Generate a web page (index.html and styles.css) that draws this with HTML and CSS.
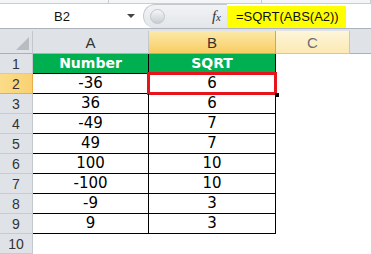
FILE: index.html
```html
<!DOCTYPE html>
<html lang="en">
<head>
    <meta charset="UTF-8">
    <title>SQRT</title>
    <link rel="stylesheet" href="styles.css">
</head>
<body>

<div class="ribbon">
    <div class="ribbon-part"></div>
    <div class="ribbon-part ribbon-mid"></div>
    <div class="ribbon-part"></div>
</div>

<div class="formula-bar">
    <div class="namebox">
        <span class="name">B2</span>
        <span class="arrow"></span>
    </div>
    <div class="fx-area">
        <span class="knob"></span>
        <span class="fx"><i>f</i><i class="x">x</i></span>
    </div>
    <div class="formula">=SQRT(ABS(A2))</div>
    <div class="formula-rest"></div>
</div>

<div class="band"></div>

<div class="sheet">
    <div class="row head-row">
        <div class="corner"><span class="tri"></span></div>
        <div class="col-head col-a">A</div>
        <div class="col-head col-b sel">B</div>
        <div class="col-head col-c hover">C</div>
        <div class="col-head col-rest"></div>
    </div>

    <div class="row">
        <div class="row-head">1</div>
        <div class="cell col-a title">Number</div>
        <div class="cell col-b title">SQRT</div>
    </div>
    <div class="row">
        <div class="row-head sel">2</div>
        <div class="cell col-a">-36</div>
        <div class="cell col-b active">6<span class="handle"></span></div>
    </div>
    <div class="row">
        <div class="row-head">3</div>
        <div class="cell col-a">36</div>
        <div class="cell col-b">6</div>
    </div>
    <div class="row">
        <div class="row-head">4</div>
        <div class="cell col-a">-49</div>
        <div class="cell col-b">7</div>
    </div>
    <div class="row">
        <div class="row-head">5</div>
        <div class="cell col-a">49</div>
        <div class="cell col-b">7</div>
    </div>
    <div class="row">
        <div class="row-head">6</div>
        <div class="cell col-a">100</div>
        <div class="cell col-b">10</div>
    </div>
    <div class="row">
        <div class="row-head">7</div>
        <div class="cell col-a">-100</div>
        <div class="cell col-b">10</div>
    </div>
    <div class="row">
        <div class="row-head">8</div>
        <div class="cell col-a">-9</div>
        <div class="cell col-b">3</div>
    </div>
    <div class="row">
        <div class="row-head">9</div>
        <div class="cell col-a">9</div>
        <div class="cell col-b">3</div>
    </div>
    <div class="row">
        <div class="row-head">10</div>
    </div>
</div>

</body>
</html>
```

FILE: styles.css
```css
body {
    margin: 0;
    width: 371px;
    height: 254px;
    overflow: hidden;
    background-color: #fff;
    font-family: "Liberation Sans", Arial, sans-serif;
}
.ribbon {
    display: flex;
    height: 3px;
    background-color: #f4f5f7;
    border-bottom: 1px solid #c9ccd1;
}
.ribbon-part {
    width: 150px;
    border-right: 1px solid #c9ccd1;
}
.ribbon-mid {
    width: 209px;
}
.formula-bar {
    display: flex;
    height: 24px;
    border-bottom: 1px solid #aeb3bb;
    background-color: #fff;
}
.namebox {
    width: 141px;
    display: flex;
    align-items: center;
    position: relative;
}
.name {
    width: 124px;
    text-align: center;
    font-size: 13px;
    color: #111;
}
.arrow {
    width: 0;
    height: 0;
    border-left: 4px solid transparent;
    border-right: 4px solid transparent;
    border-top: 4px solid #444;
    margin-left: 3px;
}
.fx-area {
    width: 84px;
    margin-left: 2px;
    display: flex;
    align-items: center;
    justify-content: space-between;
    background: linear-gradient(#f1f3f5, #e3e6ea);
    border: 1px solid #c4c9d0;
    border-right: none;
    border-bottom: none;
    border-radius: 12px 0 0 12px;
    box-sizing: border-box;
}
.knob {
    width: 13px;
    height: 13px;
    margin-left: 6px;
    border-radius: 50%;
    background: linear-gradient(#f5f6f8, #c9cdd3);
    border: 1px solid #c3c7cd;
}
.fx {
    margin-right: 6px;
    font-family: "Liberation Serif", serif;
    font-size: 15px;
    color: #333;
}
.fx .x {
    font-size: 11px;
}
.formula {
    width: 119px;
    height: 22px;
    margin-top: 2px;
    padding-left: 9px;
    box-sizing: border-box;
    background-color: #ffff00;
    font-size: 13px;
    line-height: 22px;
    color: #111;
}
.formula-rest {
    flex: 1;
}
.band {
    height: 2px;
    background-color: #dfe3e8;
}
.row {
    display: flex;
    height: 20px;
}
.head-row {
    height: 23px;
}
.corner {
    width: 33px;
    position: relative;
    background-color: #dfe3e8;
    border-right: 1px solid #c3c8cf;
    border-bottom: 1px solid #a9b0ba;
    box-sizing: border-box;
}
.tri {
    position: absolute;
    right: 3px;
    bottom: 3px;
    width: 0;
    height: 0;
    border-left: 13px solid transparent;
    border-bottom: 13px solid #b8bdc4;
}
.col-head {
    box-sizing: border-box;
    background-color: #dfe3e8;
    border-right: 1px solid #c3c8cf;
    border-bottom: 1px solid #a9b0ba;
    text-align: center;
    font-size: 15px;
    line-height: 23px;
    color: #333;
}
.col-a {
    width: 116px;
}
.col-b {
    width: 127px;
}
.col-c {
    width: 74px;
}
.col-rest {
    flex: 1;
    border-right: none;
}
.col-head.sel {
    background: linear-gradient(#fce9a9, #f8cd63);
    border-right-color: #e2a33c;
    border-bottom-color: #e2a33c;
}
.col-head.hover {
    background: linear-gradient(#fef6da, #fce9b4);
    border-right-color: #f0c46b;
    border-bottom-color: #f0c46b;
    color: #6a6f78;
}
.row-head {
    width: 33px;
    box-sizing: border-box;
    background-color: #dfe3e8;
    border-right: 1px solid #c3c8cf;
    border-bottom: 1px solid #c8ccd2;
    text-align: center;
    font-size: 14px;
    line-height: 21px;
    color: #333;
}
.row-head.sel {
    background: linear-gradient(90deg, #fbdc88, #f9d172);
    border-bottom-color: #e9ad49;
    border-right-color: #e9ad49;
}
.cell {
    position: relative;
    box-sizing: border-box;
    border-right: 1px solid #000;
    border-bottom: 1px solid #000;
    text-align: center;
    font-family: "DejaVu Sans", Verdana, sans-serif;
    font-size: 15px;
    line-height: 19px;
    color: #000;
}
.cell.title {
    background-color: #00b050;
    color: #fff;
    font-weight: bold;
    font-size: 14px;
}
.cell.active::after {
    content: "";
    position: absolute;
    left: -2px;
    top: -2px;
    right: -2px;
    bottom: -2px;
    border: 3px solid #e8141b;
}
.handle {
    position: absolute;
    right: -4px;
    bottom: -4px;
    width: 4px;
    height: 4px;
    background-color: #000;
    z-index: 1;
}
```
